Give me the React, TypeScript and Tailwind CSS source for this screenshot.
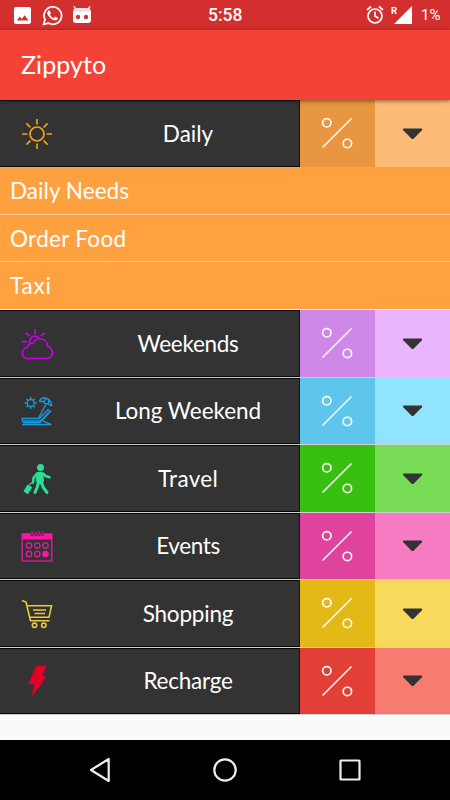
// App.tsx
import React from 'react';

const SunIcon = () => (
  <svg width="32" height="32" viewBox="0 0 32 32" fill="none" stroke="#f0a020" strokeWidth="1.7">
    <circle cx="16" cy="16" r="7" />
    <path d="M16 1v5.500M16 25.500V31M1 16h5.500M25.500 16H31M5.400 5.400l4 4M22.600 22.600l4 4M5.400 26.600l4-4M22.600 9.400l4-4" />
  </svg>
);

const CloudIcon = () => (
  <svg width="32" height="32" viewBox="0 0 32 32" fill="none" stroke="#c800e6" strokeWidth="1.700">
    <circle cx="14" cy="13.700" r="5.500" />
    <path d="M14 1v5M4.800 4.800l3.600 3.400M23.500 4.800l-3.600 3.400M1 13.700h5" />
    <path d="M7 30.500a5.500 5.500 0 0 1-.5-11a5 5 0 0 1 6-4.300a7.300 7.300 0 0 1 14 3.300a6.100 6.100 0 0 1-.5 12z" fill="#333" />
  </svg>
);

const BeachIcon = () => (
  <svg width="32" height="32" viewBox="0 0 32 32" fill="none" stroke="#1a9be0" strokeWidth="1.3">
    <circle cx="9.700" cy="8" r="3.500" />
    <path d="M9.700 2v2M9.700 12v2M3.700 8h2M13.700 8h2M5.500 3.800l1.400 1.400M12.500 10.800l1.400 1.400M5.500 12.200l1.400-1.400M12.500 5.200l1.400-1.400" />
    <path d="M18.500 6.200c2.500-5.500 11-4.500 12.300 4.500l-2.300-.6-1.700-1.700-2.800.2-1.700-1.900zM25.500 8.500L17.500 23M23 6.500c1-2.500 2-3.500 3.500-3M27.500 8.500c.5-2 .3-3.500-1-5" />
    <path d="M1 23.300h17.500l8.500-8.500 2 1.500-9.500 9.700H1.500zM1 29.500h29.500M2 27.700h17l11-12M21 25.500l9.500 4" />
  </svg>
);

const TravelIcon = () => (
  <svg width="32" height="32" viewBox="0 0 32 32" fill="none" stroke="#28e094" strokeLinecap="round" strokeLinejoin="round">
    <circle cx="19.500" cy="4.500" r="3.500" fill="#28e094" stroke="none" />
    <path d="M16.500 9.500q3-1 5 .5l1 8-2.500 3h-2.500l-2-3z" fill="#28e094" strokeWidth="1" />
    <path d="M17.500 18l-1.200 6-2.300 5.500M20.300 18l1.700 6 4 5.500" strokeWidth="3" />
    <path d="M16 10.500l-3.500 4.500-.5 4.500M22 10.500l2.500 2.500 4 1.300" strokeWidth="2.500" />
    <path d="M8.500 21.500l2.700-1.700M6.800 22.300l3.700 2.200-4 6L3.300 28z" fill="#28e094" strokeWidth="1.300" />
  </svg>
);

const CalendarIcon = () => (
  <svg width="32" height="32" viewBox="0 0 32 32" fill="none" stroke="#e81ca0" strokeWidth="1.300">
    <path d="M1.200 4h29.600v27H1.200z" stroke="#c91e8c" strokeWidth="1.600" />
    <path d="M1 3.500h30v6H1z" fill="#ff12aa" stroke="none" />
    <path d="M9.500 5c3 0 3-3.500.5-3.500M13 5c3 0 3-3.500.5-3.500M16.500 5c3 0 3-3.500.5-3.500M20 5c3 0 3-3.500.5-3.500" stroke="#4a2840" strokeWidth="2.400" />
    <path d="M9.500 5c3 0 3-3.500.5-3.500M13 5c3 0 3-3.500.5-3.500M16.500 5c3 0 3-3.500.5-3.500M20 5c3 0 3-3.500.5-3.500" stroke="#ff12aa" strokeWidth=".9" />
    <circle cx="8" cy="15.500" r="2.700" />
    <circle cx="16.300" cy="15.500" r="2.700" />
    <circle cx="24.500" cy="15.500" r="2.700" />
    <circle cx="8" cy="24" r="2.700" />
    <circle cx="16.300" cy="24" r="2.700" />
    <circle cx="24.500" cy="24" r="2.700" fill="#ff12aa" />
  </svg>
);

const CartIcon = () => (
  <svg width="32" height="32" viewBox="0 0 32 32" fill="none" stroke="#edc936" strokeWidth="1.600">
    <path d="M1 2.500l4 1.500 4.500 18.700h19M6.300 7.800h24.200L28 19.300H8.800" />
    <path d="M12 12h13M13.500 15.500H24" />
    <circle cx="13.500" cy="27.300" r="2.200" />
    <circle cx="22.800" cy="27.300" r="2.200" />
  </svg>
);

const BoltIcon = () => (
  <svg width="32" height="32" viewBox="0 0 32 32" fill="#e30028" stroke="#e30028" strokeLinejoin="round">
    <path d="M15.500 1.500h9L20.800 12h4L11.300 30.700l2.400-12H7.800z" />
  </svg>
);

const PercentIcon = () => (
  <svg className="-ml-px -mt-px" width="32" height="32" viewBox="0 0 32 32" fill="none" stroke="#fff" strokeWidth="1.600">
    <circle cx="5.800" cy="5.800" r="4.200" />
    <circle cx="26.400" cy="26.400" r="4.200" />
    <path d="M30.500 1.500l-29 29" strokeWidth="1.400" />
  </svg>
);

const categories = [
  { name: 'Daily', icon: <SunIcon />, height: 'h-[67px]', percent: 'bg-[#e8963f]', arrow: 'bg-[#fdbb78]', spacing: 'tracking-normal', items: ['Daily Needs', 'Order Food', 'Taxi'] },
  { name: 'Weekends', icon: <CloudIcon />, height: 'h-[68px]', percent: 'bg-[#cf88e8]', arrow: 'bg-[#eab4ff]', spacing: 'tracking-[-0.3px]' },
  { name: 'Long Weekend', icon: <BeachIcon />, height: 'h-[67px]', percent: 'bg-[#5dc6ea]', arrow: 'bg-[#91e4ff]', spacing: 'tracking-[-0.05px]' },
  { name: 'Travel', icon: <TravelIcon />, height: 'h-[68px]', percent: 'bg-[#38bf0f]', arrow: 'bg-[#78dc57]', spacing: 'tracking-[0.3px]' },
  { name: 'Events', icon: <CalendarIcon />, height: 'h-[67px]', percent: 'bg-[#e0439d]', arrow: 'bg-[#f77cc3]', spacing: 'tracking-[-0.4px]' },
  { name: 'Shopping', icon: <CartIcon />, height: 'h-[68px]', percent: 'bg-[#e3b917]', arrow: 'bg-[#f7d95c]', spacing: 'tracking-[-0.2px]' },
  { name: 'Recharge', icon: <BoltIcon />, height: 'h-[67px]', percent: 'bg-[#e24037]', arrow: 'bg-[#f87b72]', spacing: 'tracking-[-0.25px]' },
];

const itemStyles = [
  'h-12 border-[#ffcf99] tracking-[0.05px]',
  'h-[47px] border-[#ffcf99] tracking-[0.3px] pt-px',
  'h-12 border-[#fff3e0] tracking-[0.8px]',
];

const StatusBar = () => (
  <div className="relative flex h-[30px] items-center justify-between bg-[#d32f2f] pl-3.5 pr-2.5 font-[Roboto,sans-serif] text-white">
    <div className="flex items-center">
      <svg width="17" height="17" viewBox="0 0 17 17" fillRule="evenodd" fill="#fff">
        <path d="M2 0h13q2 0 2 2v13q0 2-2 2H2q-2 0-2-2V2q0-2 2-2zM3 13.500h11.500L10.700 8.300l-3 3.700-2-2.400z" />
      </svg>
      <svg className="ml-[11px]" width="21" height="21" viewBox="0 0 24 24" fill="#fff">
        <path d="M17.472 14.382c-.297-.149-1.758-.867-2.030-.967-.273-.099-.471-.148-.670.150-.197.297-.767.966-.940 1.164-.173.199-.347.223-.644.075-.297-.150-1.255-.463-2.390-1.475-.883-.788-1.480-1.761-1.653-2.059-.173-.297-.018-.458.130-.606.134-.133.298-.347.446-.520.149-.174.198-.298.298-.497.099-.198.050-.371-.025-.520-.075-.149-.669-1.612-.916-2.207-.242-.579-.487-.500-.669-.510-.173-.008-.371-.010-.570-.010-.198 0-.520.074-.792.372-.272.297-1.040 1.016-1.040 2.479 0 1.462 1.065 2.875 1.213 3.074.149.198 2.096 3.200 5.077 4.487.709.306 1.262.489 1.694.625.712.227 1.360.195 1.871.118.571-.085 1.758-.719 2.006-1.413.248-.694.248-1.289.173-1.413-.074-.124-.272-.198-.570-.347z" />
        <path d="M2 22l1.500-5.300A10 10 0 1 1 7.300 20.700z" fill="none" stroke="#fff" strokeWidth="2" />
      </svg>
      <svg className="-mt-px ml-[9px]" width="20" height="18" viewBox="0 0 20 18">
        <path d="M2 0l1.500 3M18 0l-1.500 3" stroke="#fff" strokeWidth="1.300" />
        <path d="M1 6h18v8q0 3-3 3H4q-3 0-3-3z" fill="#fff" />
        <path d="M1 6q0-4 4-4h10q4 0 4 4z" fill="#fff" opacity=".85" />
        <circle cx="6" cy="11" r="2.200" fill="#d32f2f" />
        <circle cx="14" cy="11" r="2.200" fill="#d32f2f" />
      </svg>
    </div>
    <span className="absolute left-[208px] top-[5px] text-[17.500px] font-medium leading-[21px]">5:58</span>
    <div className="flex items-center">
      <svg width="18" height="20" viewBox="0 0 18 20" fill="none" stroke="#fff" strokeWidth="1.700">
        <circle cx="9" cy="11" r="7" />
        <path d="M9 6.500V11l3.500 2.200M1 5l4-3.500M17 5l-4-3.500" />
      </svg>
      <svg className="ml-[7px]" width="22" height="20" viewBox="0 0 22 20" fill="#fff">
        <path d="M21 1v18H3z" />
        <text x="0" y="8.500" fontSize="9.500" fontWeight="700" fontFamily="Roboto">R</text>
      </svg>
      <span className="ml-2 w-[19px] text-[15px] leading-5">1%</span>
    </div>
  </div>
);

const CategoryRow = ({ category, first }) => (
  <div className={`flex ${category.height} ${first ? '' : 'border-b border-[#d0d0d0]'}`}>
    <div className="flex w-[300px] items-center border-y border-r border-y-[#080808] border-r-[#101214] bg-[#333] pl-[21px]">
      <span className="shrink-0">{category.icon}</span>
      <span className={`ml-[25px] w-[220px] shrink-0 text-center text-[22.500px] leading-7 ${category.spacing}`}>{category.name}</span>
    </div>
    <div className={`flex w-[75px] items-center justify-center ${category.percent}`}>
      <PercentIcon />
    </div>
    <div className={`flex w-[75px] items-center justify-center ${category.arrow}`}>
      <svg width="21" height="12" viewBox="-.6 0 21 12" fill="#333">
        <path d="M1 .5h18q1.200.7.3 1.700L11 10.700q-1 .8-2 0L.7 2.200Q-.2 1.200 1 .5z" />
      </svg>
    </div>
  </div>
);

const App = () => {
  return (
    <div className="flex h-[800px] w-[450px] flex-col overflow-hidden bg-[#fafafa] font-[Lato,sans-serif] text-white">
      <StatusBar />
      <header className="z-10 flex h-[70px] items-center bg-[#f44336] pl-[21px] shadow-[0_1px_4px_rgba(0,0,0,0.5)]">
        <h1 className="-mt-0.5 text-[25px] leading-8 tracking-[0.1px]">Zippyto</h1>
      </header>

      <main className="flex-1">
        {categories.map((category, index) => (
          <React.Fragment key={category.name}>
            <CategoryRow category={category} first={index === 0} />
            {category.items && (
              <ul>
                {category.items.map((item, i) => (
                  <li key={item} className={`flex items-center border-b bg-[#ffa13f] pl-2.5 text-[22.500px] ${itemStyles[i]}`}>
                    {item}
                  </li>
                ))}
              </ul>
            )}
          </React.Fragment>
        ))}
      </main>

      <nav className="flex h-[60px] items-center justify-between bg-black pl-[88px] pr-[88px]">
        <svg width="24" height="26" viewBox="0 0 24 26" fill="none" stroke="#eee" strokeWidth="2.200" strokeLinejoin="round">
          <path d="M20.700 2v22L3 13z" />
        </svg>
        <svg width="26" height="26" viewBox="0 0 26 26" fill="none" stroke="#eee" strokeWidth="2.200">
          <circle cx="13" cy="13" r="10.700" />
        </svg>
        <svg width="24" height="24" viewBox="0 0 24 24" fill="none" stroke="#eee" strokeWidth="2.200">
          <rect x="2.500" y="2.500" width="19" height="19" rx=".5" />
        </svg>
      </nav>
    </div>
  );
};

export default App;
